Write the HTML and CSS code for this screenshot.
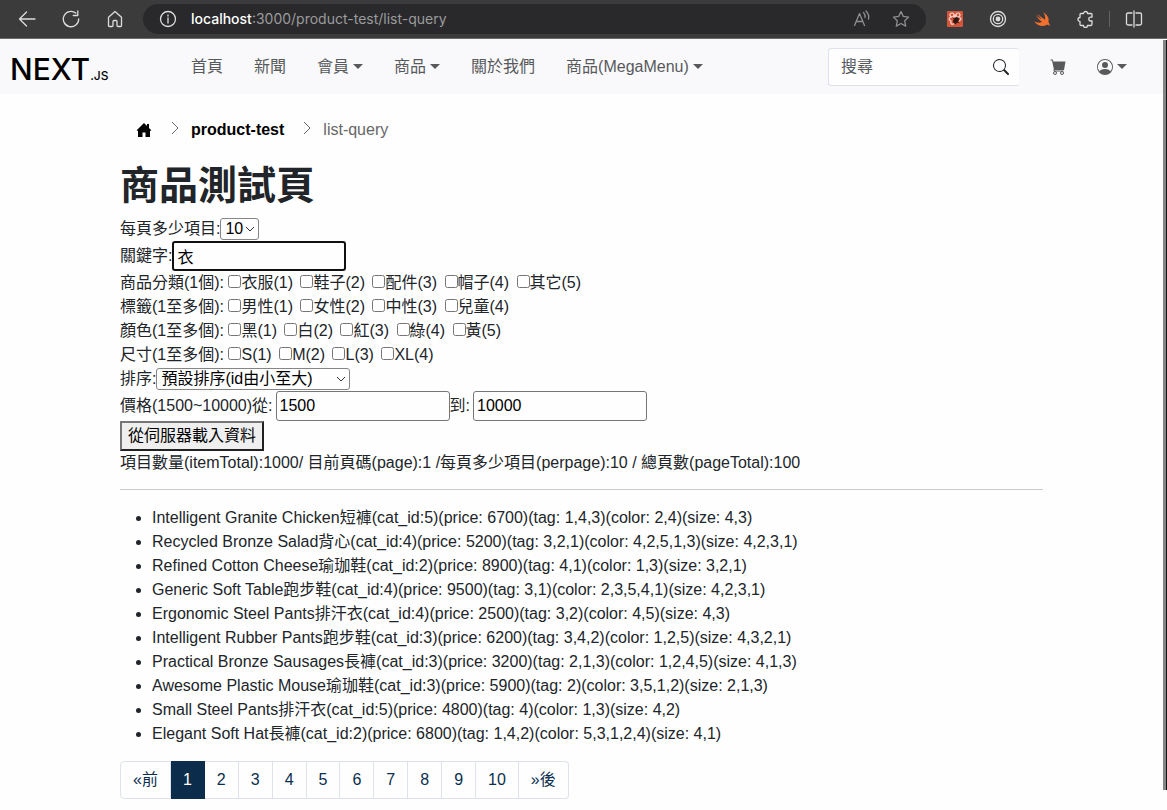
FILE: index.html
```html
<!DOCTYPE html>
<html lang="zh-Hant">
<head>
<meta charset="utf-8">
<title>商品測試頁</title>
<link rel="stylesheet" href="styles.css">
</head>
<body>
<div class="chrome">
  <button class="tool" aria-label="Back"><svg width="18" height="18" viewBox="0 0 18 18"><path d="M17 9H1.500M8.500 2 1.500 9l7 7"/></svg></button>
  <button class="tool" aria-label="Reload"><svg width="18" height="18" viewBox="0 0 18 18"><path d="M16.700 9A7.700 7.700 0 1 1 13.800 3M15.800 1v4.500h-4.500"/></svg></button>
  <button class="tool" aria-label="Home"><svg width="18" height="18" viewBox="0 0 18 18"><path d="M2.500 7.200 9 1.500l6.500 5.700v8.300q0 1-1 1H12q-1 0-1-1v-4q0-1-1-1H8q-1 0-1 1v4q0 1-1 1H3.500q-1 0-1-1z"/></svg></button>
  <div class="address">
    <svg width="18" height="18" viewBox="0 0 18 18"><circle cx="9" cy="9" r="7.500"/><path d="M9 8v5M9 5v1"/></svg>
    <span class="url"><b>localhost</b>:3000/product-test/list-query</span>
    <button class="tool dim" aria-label="Read aloud"><svg width="18" height="18" viewBox="0 0 18 18"><path d="M1.500 15.500 6.500 3.500l5 12M3.300 11.500h6.500M10.500 2.500q2 2 1.500 5M13 1q3.500 3.500 2.500 8"/></svg></button>
    <button class="tool dim" aria-label="Favorite"><svg width="18" height="18" viewBox="0 0 18 18"><path d="m9 1.500 2.300 4.900 5.300.7-3.900 3.700 1 5.300L9 13.500l-4.700 2.600 1-5.300L1.400 7.100l5.300-.7z"/></svg></button>
  </div>
  <div class="extensions">
    <button class="tool" aria-label="React tools"><svg width="16" height="16" viewBox="0 0 16 16"><rect width="16" height="16" rx="1" fill="#d4553a" stroke="none"/><g stroke="#f5dcd6" stroke-width="1.200"><circle cx="5" cy="4" r="2"/><circle cx="11" cy="4" r="2"/><path d="M4 6Q0 8 4 10q-1 4 3 3M12 6q4 2 0 4M7 6l1-2 1 2"/></g><ellipse cx="9" cy="9.500" rx="2.500" ry="3.200" fill="#301812" stroke="none" transform="rotate(35 9 9.500)"/><path d="m6 7 6 5M6 11l6-4M8 13l2-7" stroke="#301812" stroke-width=".8"/></svg></button>
    <button class="tool" aria-label="Target"><svg width="18" height="18" viewBox="0 0 18 18"><circle cx="9" cy="9" r="7.500"/><circle cx="9" cy="9" r="4.700"/><circle cx="9" cy="9" r="1.800" fill="#ddd"/></svg></button>
    <button class="tool" aria-label="Swift"><svg width="18" height="18" viewBox="0 0 18 18"><path d="M10 2c5 3 6.300 7 5.400 10 1.700 2 1.400 4 1.100 4-1-1.500-2.300-1.500-3.500-.8C9 17.200 4 15.500 1 11c2.500 1.700 5.500 2.300 8 .9C6.300 9.800 4 7 2.500 4.700 4.500 6.600 6.800 8.300 8.600 9.200 7 7.500 5.300 5 4.300 3.500c2.400 2.400 5 4.600 7.700 6.300C12.700 7 11.700 4.200 10 2z" fill="#f5702f" stroke="none"/></svg></button>
    <button class="tool" aria-label="Extensions"><svg width="18" height="18" viewBox="0 0 18 18"><path d="M4 3.500h2.500a2 2 0 0 1 4 0H14q1 0 1 1v2.700h-1.300a1.900 1.900 0 0 0 0 3.800H15v3q0 1.500-1 1.500h-3.500a2 2 0 0 1-4 0H4q-1 0-1-1v-3a2 2 0 0 1 0-4v-3q0-1 1-1z"/></svg></button>
    <span class="separator"></span>
    <button class="tool" aria-label="Split screen"><svg width="18" height="18" viewBox="0 0 18 18"><path d="M7 3H3Q1.500 3 1.500 4.500v9Q1.500 15 3 15h4M11 3H15q1.500 0 1.500 1.500v9q0 1.500-1.500 1.500h-4M9 1v16"/></svg></button>
  </div>
</div>
<div class="page">
  <header class="navbar">
    <a class="brand" href="#"><span>NEXT</span><small>.JS</small></a>
    <nav class="menu">
      <a href="#">首頁</a>
      <a href="#">新聞</a>
      <a class="drop" href="#">會員</a>
      <a class="drop" href="#">商品</a>
      <a href="#">關於我們</a>
      <a class="drop" href="#">商品(MegaMenu)</a>
    </nav>
    <form class="search">
      <input type="text" placeholder="搜尋" aria-label="搜尋">
      <button type="button" aria-label="送出搜尋"><svg width="16" height="16" viewBox="0 0 16 16"><path d="M11.742 10.344a6.500 6.500 0 1 0-1.397 1.398l3.948 3.965a1 1 0 0 0 1.415-1.414l-3.966-3.949zM12 6.500a5.500 5.500 0 1 1-11 0 5.500 5.500 0 0 1 11 0"/></svg></button>
    </form>
    <a class="cart" href="#" aria-label="購物車"><svg width="16" height="16" viewBox="0 0 16 16"><path d="M.5 .5h2q.4 0 .5.400L3.400 2.500H15.500l-1.500 8.500H4L2 1.500H.5z"/><g fill="none" stroke="#58595b" stroke-width="1"><path d="M4 10.500v1.500h9.500"/><circle cx="5" cy="14" r="1.500"/><circle cx="12" cy="14" r="1.500"/></g></svg></a>
    <a class="account drop" href="#" aria-label="帳號"><svg width="16" height="16" viewBox="0 0 16 16"><path d="M11 6a3 3 0 1 1-6 0 3 3 0 0 1 6 0"/><path fill-rule="evenodd" d="M0 8a8 8 0 1 1 16 0A8 8 0 0 1 0 8m8-7a7 7 0 0 0-5.468 11.370C3.242 11.226 4.805 10 8 10s4.757 1.225 5.468 2.370A7 7 0 0 0 8 1"/></svg></a>
  </header>
  <main class="container">
    <nav class="breadcrumb" aria-label="breadcrumb">
      <a href="#" aria-label="首頁"><svg width="16" height="16" viewBox="0 0 16 16"><path d="M8 1 .7 8.200l.8.800L2 8.500V15h4.500v-4.500h3V15H14V8.500l.5.500.8-.8L13 5.900V2h-2v1.900z"/></svg></a>
      <svg class="chevron" width="8" height="14" viewBox="0 0 8 14"><path d="m1 1 6 6-6 6"/></svg>
      <a class="parent" href="#">product-test</a>
      <svg class="chevron" width="8" height="14" viewBox="0 0 8 14"><path d="m1 1 6 6-6 6"/></svg>
      <span>list-query</span>
    </nav>
    <h1>商品測試頁</h1>
    <div class="row"><label for="perpage">每頁多少項目:</label><select id="perpage" class="short"><option>10</option></select></div>
    <div class="row"><label for="keyword">關鍵字:</label><input id="keyword" class="focused" type="text" value="衣" autofocus></div>
    <div class="checks">商品分類(1個): <label><input type="checkbox">衣服(1)</label> <label><input type="checkbox">鞋子(2)</label> <label><input type="checkbox">配件(3)</label> <label><input type="checkbox">帽子(4)</label> <label><input type="checkbox">其它(5)</label></div>
    <div class="checks">標籤(1至多個): <label><input type="checkbox">男性(1)</label> <label><input type="checkbox">女性(2)</label> <label><input type="checkbox">中性(3)</label> <label><input type="checkbox">兒童(4)</label></div>
    <div class="checks">顏色(1至多個): <label><input type="checkbox">黑(1)</label> <label><input type="checkbox">白(2)</label> <label><input type="checkbox">紅(3)</label> <label><input type="checkbox">綠(4)</label> <label><input type="checkbox">黃(5)</label></div>
    <div class="checks">尺寸(1至多個): <label><input type="checkbox">S(1)</label> <label><input type="checkbox">M(2)</label> <label><input type="checkbox">L(3)</label> <label><input type="checkbox">XL(4)</label></div>
    <div class="row"><label for="sort">排序:</label><select id="sort" class="long"><option>預設排序(id由小至大)</option></select></div>
    <div class="row"><label class="spaced" for="from">價格(1500~10000)從:</label><input id="from" type="text" value="1500"><label class="spaced" for="to">到:</label><input id="to" type="text" value="10000"></div>
    <div class="row"><button class="load" type="button">從伺服器載入資料</button></div>
    <div class="summary">項目數量(itemTotal):1000/ 目前頁碼(page):1 /每頁多少項目(perpage):10 / 總頁數(pageTotal):100</div>
    <hr>
    <ul class="results">
      <li>Intelligent Granite Chicken短褲(cat_id:5)(price: 6700)(tag: 1,4,3)(color: 2,4)(size: 4,3)</li>
      <li>Recycled Bronze Salad背心(cat_id:4)(price: 5200)(tag: 3,2,1)(color: 4,2,5,1,3)(size: 4,2,3,1)</li>
      <li>Refined Cotton Cheese瑜珈鞋(cat_id:2)(price: 8900)(tag: 4,1)(color: 1,3)(size: 3,2,1)</li>
      <li>Generic Soft Table跑步鞋(cat_id:4)(price: 9500)(tag: 3,1)(color: 2,3,5,4,1)(size: 4,2,3,1)</li>
      <li>Ergonomic Steel Pants排汗衣(cat_id:4)(price: 2500)(tag: 3,2)(color: 4,5)(size: 4,3)</li>
      <li>Intelligent Rubber Pants跑步鞋(cat_id:3)(price: 6200)(tag: 3,4,2)(color: 1,2,5)(size: 4,3,2,1)</li>
      <li>Practical Bronze Sausages長褲(cat_id:3)(price: 3200)(tag: 2,1,3)(color: 1,2,4,5)(size: 4,1,3)</li>
      <li>Awesome Plastic Mouse瑜珈鞋(cat_id:3)(price: 5900)(tag: 2)(color: 3,5,1,2)(size: 2,1,3)</li>
      <li>Small Steel Pants排汗衣(cat_id:5)(price: 4800)(tag: 4)(color: 1,3)(size: 4,2)</li>
      <li>Elegant Soft Hat長褲(cat_id:2)(price: 6800)(tag: 1,4,2)(color: 5,3,1,2,4)(size: 4,1)</li>
    </ul>
    <nav class="pagination" aria-label="分頁">
      <a href="#">«前</a><a class="active" href="#">1</a><a href="#">2</a><a href="#">3</a><a href="#">4</a><a href="#">5</a><a href="#">6</a><a href="#">7</a><a href="#">8</a><a href="#">9</a><a href="#">10</a><a href="#">»後</a>
    </nav>
  </main>
  <div class="scrollbar"></div>
</div>
</body>
</html>
```
FILE: styles.css
```css
* { box-sizing: border-box; }
body {
  margin: 0;
  min-height: 100vh;
  display: flex;
  flex-direction: column;
  background: #fefefe;
  color: #212529;
  font: 16px/24px "Liberation Sans", "Noto Sans CJK TC", sans-serif;
}
a { color: inherit; text-decoration: none; }
button, input, select { font: inherit; color: #000; margin: 0; }
svg { display: block; flex: none; }

.chrome {
  display: flex;
  align-items: center;
  gap: 26px;
  height: 39px;
  padding: 0 24px 0 18px;
  background: #3b3b3c;
  border-bottom: 1px solid #6b6b6c;
}
.chrome svg { fill: none; stroke: #ddd; stroke-width: 1.3; stroke-linecap: round; stroke-linejoin: round; }
.tool { padding: 0; border: 0; background: none; }
.chrome .dim svg { stroke: #8e8e90; }
.address {
  flex: 1;
  display: flex;
  align-items: center;
  gap: 14px;
  height: 30px;
  margin-left: -7px;
  margin-right: -5px;
  padding: 0 16px;
  border-radius: 15px;
  background: #29292b;
}
.address .dim + .dim { margin-left: 7px; }
.url { flex: 1; color: #9b9b9d; font: 14px/20px Inter, sans-serif; }
.url b { color: #fff; font-weight: 500; }
.extensions { display: flex; align-items: center; gap: 26px; }
.separator { width: 1px; height: 16px; margin: 0 -11px 0 -12px; background: #626264; }

.page { position: relative; flex: 1; padding-right: 4px; }
.scrollbar {
  position: absolute;
  top: 1px;
  right: 0;
  bottom: 20px;
  width: 4px;
  background: #858585;
  border-right: 1px solid #111;
}
.navbar {
  display: flex;
  align-items: center;
  height: 55px;
  padding: 0 36px 0 10px;
  background: #f9f9fc;
  color: #58595b;
}
.brand { display: flex; align-items: baseline; width: 101px; margin-right: 80px; padding-top: 4px; color: #000; line-height: 32px; }
.brand span { font-family: Inter, sans-serif; font-size: 30px; font-weight: 500; }
.brand small { font: 500 12px Inter, sans-serif; }
.menu { display: flex; flex: 1; gap: 31px; }
.drop { display: flex; align-items: center; gap: 4px; }
.drop::after { content: ""; border: 5px solid transparent; border-top-color: currentColor; border-bottom: 0; }
.navbar svg { fill: currentColor; }
.search {
  display: flex;
  align-items: center;
  width: 191px;
  height: 38px;
  margin-right: 31px;
  border: 1px solid #dee2ec;
  border-right: 0;
  border-radius: 3px;
  background: #fefefe;
}
.search input { flex: 1; min-width: 0; padding: 0 12px; border: 0; outline: 0; background: none; }
.search input::placeholder { color: #55585c; opacity: 1; }
.search button { padding: 0 10px; border: 0; background: none; color: #212529; }
.cart { margin-right: 31px; }

.container { max-width: 923px; margin: 0 auto; padding-bottom: 8px; }
.breadcrumb { display: flex; align-items: center; gap: 12px; padding: 24px 16px 20px; color: #666; }
.breadcrumb a { color: #000; }
.breadcrumb .chevron { margin: 0 0 4px 7px; fill: none; stroke: #6c6c6c; }
.parent { font-weight: bold; }
h1 { margin: 0 0 8px; font-size: 39px; line-height: 47px; font-weight: 600; }
.row { display: flex; align-items: center; min-height: 24px; }
.row input { width: 174px; height: 30px; padding: 1px 3px; border: 1px solid #767676; border-radius: 3px; background: #fefefe; }
.row .focused { border: 2px solid #101010; outline: 0; }
.row .spaced { padding-right: 3px; }
.row select {
  appearance: none;
  height: 22px;
  padding: 0 4px;
  border: 1px solid #858585;
  border-radius: 3px;
  line-height: 20px;
  background: #fefefe url("data:image/svg+xml,%3Csvg xmlns='http://www.w3.org/2000/svg' width='10' height='6'%3E%3Cpath d='m1 1 4 4 4-4' fill='none' stroke='%23333'/%3E%3C/svg%3E") no-repeat right 3px center;
}
.row .short { width: 39px; }
.row .long { width: 194px; }
.checks input { width: 13px; height: 13px; margin: 0 0 0 3px; vertical-align: baseline; }
.checks label:first-child input { margin-left: 0; }
.row .load { height: 30px; padding: 0 6px; border: 2px outset #767676; background: #efefef; }
hr { margin: 14px 0 16px; border: 0; border-top: 1px solid #c9cacb; }
.results { margin: 0 0 15px; padding-left: 32px; }
.pagination { display: flex; width: max-content; color: #0b2e4f; }
.pagination a { padding: 6px 12px; border: 1px solid #dee2ea; border-left-width: 0; }
.pagination a:first-child { border-left-width: 1px; border-radius: 4px 0 0 4px; }
.pagination a:last-child { border-radius: 0 4px 4px 0; }
.pagination .active { border-color: #0b2c4a; background: #0b2c4a; color: #fff; }
```
